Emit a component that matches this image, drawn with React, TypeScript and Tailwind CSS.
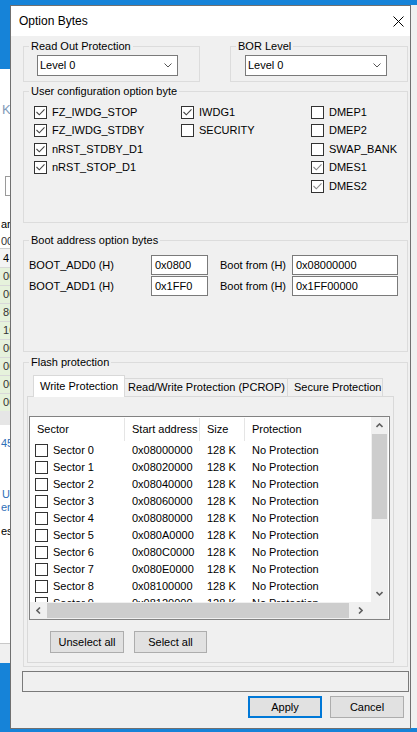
import React from 'react'

const sectors = [
  ['Sector 0', '0x08000000'],
  ['Sector 1', '0x08020000'],
  ['Sector 2', '0x08040000'],
  ['Sector 3', '0x08060000'],
  ['Sector 4', '0x08080000'],
  ['Sector 5', '0x080A0000'],
  ['Sector 6', '0x080C0000'],
  ['Sector 7', '0x080E0000'],
  ['Sector 8', '0x08100000'],
  ['Sector 9', '0x08120000'],
]

function Check({ on, dim }: { on?: boolean; dim?: boolean }) {
  return (
    <span className="flex h-[13px] w-[13px] shrink-0 items-center justify-center border border-[#333333] bg-white">
      {on && (
        <svg width="11" height="11" viewBox="0 0 11 11">
          <path
            d="M1.5 5 L4.3 7.8 L9.5 2.3"
            fill="none"
            strokeWidth="1.1"
            className={dim ? 'stroke-[#8a8a8a]' : 'stroke-[#444444]'}
          />
        </svg>
      )}
    </span>
  )
}

function CheckItem({ label, on, dim }: { label: string; on?: boolean; dim?: boolean }) {
  return (
    <div className="flex h-[18.5px] items-center">
      <Check on={on} dim={dim} />
      <span className="ml-[5px]">{label}</span>
    </div>
  )
}

function Combo({ w }: { w: string }) {
  return (
    <div className={`flex h-[21px] items-center justify-between border border-[#7a7a7a] bg-white pl-[2px] pr-[5px] ${w}`}>
      <span>Level 0</span>
      <svg width="8" height="5" viewBox="0 0 8 5">
        <path d="M0.5 0.5 L4 4 L7.5 0.5" fill="none" stroke="#555" strokeWidth="1" />
      </svg>
    </div>
  )
}

function Group({ title, className, children }: { title: string; className: string; children: React.ReactNode }) {
  return (
    <fieldset className={`border border-[#dcdcdc] ${className}`}>
      <legend className="ml-[5px] px-[2px] leading-[14px]">{title}</legend>
      {children}
    </fieldset>
  )
}

function Btn({ label, primary, w }: { label: string; primary?: boolean; w: string }) {
  return (
    <div
      className={`flex h-[22px] items-center justify-center bg-[#e1e1e1] ${w} ${
        primary ? 'border-2 border-[#0078d7]' : 'border border-[#adadad]'
      }`}
    >
      {label}
    </div>
  )
}

function Arrow({ dir }: { dir: 'up' | 'down' | 'left' | 'right' }) {
  const d = {
    up: 'M0.5 4 L3.5 1 L6.5 4',
    down: 'M0.5 1 L3.5 4 L6.5 1',
    left: 'M4 0.5 L1 3.5 L4 6.5',
    right: 'M1 0.5 L4 3.5 L1 6.5',
  }[dir]
  const vert = dir === 'up' || dir === 'down'
  return (
    <svg width={vert ? 7 : 5} height={vert ? 5 : 7} viewBox={vert ? '0 0 7 5' : '0 0 5 7'}>
      <path d={d} fill="none" stroke="#606060" strokeWidth="1.6" />
    </svg>
  )
}

function SectorList() {
  return (
    <div className="ml-[1px] mt-[19px] flex h-[204px] w-[361px] flex-col border border-[#828282] bg-white">
      <div className="flex h-[185px]">
        <div className="w-[341px] overflow-hidden">
          <div className="grid h-[25px] grid-cols-[95px_75px_45px_126px] items-center">
            <div className="flex h-[23px] items-center border-r border-[#e5e5e5] pl-[7px]">Sector</div>
            <div className="flex h-[23px] items-center border-r border-[#e5e5e5] pl-[7px]">Start address</div>
            <div className="flex h-[23px] items-center border-r border-[#e5e5e5] pl-[7px]">Size</div>
            <div className="flex h-[23px] items-center pl-[7px]">Protection</div>
          </div>
          {sectors.map(([name, addr]) => (
            <div key={name} className="grid h-[17px] grid-cols-[95px_75px_45px_126px] items-center">
              <div className="flex items-center pl-[5px]">
                <Check />
                <span className="ml-[5px]">{name}</span>
              </div>
              <div className="pl-[7px]">{addr}</div>
              <div className="pl-[7px]">128 K</div>
              <div className="pl-[7px]">No Protection</div>
            </div>
          ))}
        </div>
        <div className="flex w-[17px] flex-col bg-[#f0f0f0]">
          <div className="flex h-[17px] items-center justify-center">
            <Arrow dir="up" />
          </div>
          <div className="mx-[1px] h-[85px] bg-[#cdcdcd]" />
          <div className="flex-1" />
          <div className="flex h-[17px] items-center justify-center">
            <Arrow dir="down" />
          </div>
        </div>
      </div>
      <div className="flex h-[17px]">
        <div className="flex w-[341px] items-center bg-[#f0f0f0]">
          <div className="flex w-[17px] justify-center">
            <Arrow dir="left" />
          </div>
          <div className="my-[1px] h-[15px] w-[302px] bg-[#cdcdcd]" />
          <div className="flex flex-1 justify-center">
            <Arrow dir="right" />
          </div>
        </div>
        <div className="w-[17px] bg-[#f0f0f0]" />
      </div>
    </div>
  )
}

function LeftStrip() {
  return (
    <div className="flex h-full w-[10px] flex-col overflow-hidden whitespace-nowrap text-[11px]">
      <div className="h-[69px] bg-[#1683d8]" />
      <div className="flex h-[574px] flex-col bg-white">
        <div className="mt-[34px] pl-[2px] text-[13px] text-[#7f9ab8]">K</div>
        <div className="ml-[5px] mt-[60px] h-[20px] border border-r-0 border-[#9a9a9a]" />
        <div className="mt-[22px] pl-[1px]">ar</div>
        <div className="mt-[4px] pl-[1px] text-[#333]">002</div>
        <div className="border-t border-[#cfcfcf] bg-[#f4f4f4] pl-[3px] leading-[18px]">4</div>
        {['0', '0', '8', '1', '0', '0', '0', '0'].map((t, i) => (
          <div key={i} className="border-t border-[#d9d9d9] bg-[#e6f2dc] pl-[3px] leading-[17px] text-[#333]">
            {t}0
          </div>
        ))}
        <div className="h-[14px] bg-[#e6e6e6]" />
        <div className="mt-[12px] pl-[1px] text-[#2f6fb8]">45</div>
        <div className="mt-[38px] pl-[2px] text-[#2f6fb8]">U</div>
        <div className="pl-[1px] leading-[12px] text-[#2f6fb8]">ena</div>
        <div className="mt-[12px] pl-[1px]">es</div>
      </div>
      <div className="h-[20px] border-t border-[#c8c8c8] bg-[#f0f0f0]" />
      <div className="flex-1 bg-[#1683d8]" />
    </div>
  )
}

function RightStrip() {
  return (
    <div className="flex h-full w-[6px] flex-col overflow-hidden whitespace-nowrap text-[11px]">
      <div className="h-[5px] bg-[#1683d8]" />
      <div className="flex-1 bg-[#f0f0f0]" />
      <div className="h-[4px] bg-[#1683d8]" />
    </div>
  )
}

export default function App() {
  return (
    <div className="flex h-[732px] w-[417px] overflow-hidden bg-[#1683d8] font-[family-name:'Liberation_Sans',Arial,sans-serif] text-[11px] leading-[13px] text-black">
      <LeftStrip />
      <div className="flex w-[401px] flex-col">
        <div className="h-[5px] shrink-0 bg-[#1683d8]" />
        <div className="flex h-[724px] shrink-0 flex-col border border-[#707070] bg-[#f0f0f0]">
          <div className="flex h-[30px] shrink-0 items-center justify-between bg-white pl-[8px] pr-[6px]">
            <span className="text-[12px]">Option Bytes</span>
            <svg width="11" height="11" viewBox="0 0 11 11">
              <path d="M0.5 0.5 L10.5 10.5 M10.5 0.5 L0.5 10.5" stroke="#000" strokeWidth="1" />
            </svg>
          </div>

          <div className="flex flex-col pl-[12px]">
            <div className="mt-[3px] flex">
              <Group title="Read Out Protection" className="h-[43px] w-[177px]">
                <div className="pl-[13px] pt-[2px]">
                  <Combo w="w-[141px]" />
                </div>
              </Group>
              <Group title="BOR Level" className="ml-[30px] h-[43px] w-[178px]">
                <div className="pl-[14px] pt-[2px]">
                  <Combo w="w-[142px]" />
                </div>
              </Group>
            </div>

            <Group title="User configuration option byte" className="mt-[2px] h-[139px] w-[385px]">
              <div className="grid grid-cols-[147px_130px_1fr] pl-[10px] pt-[5px]">
                <div>
                  <CheckItem label="FZ_IWDG_STOP" on />
                  <CheckItem label="FZ_IWDG_STDBY" on />
                  <CheckItem label="nRST_STDBY_D1" on />
                  <CheckItem label="nRST_STOP_D1" on />
                </div>
                <div>
                  <CheckItem label="IWDG1" on />
                  <CheckItem label="SECURITY" />
                </div>
                <div>
                  <CheckItem label="DMEP1" />
                  <CheckItem label="DMEP2" />
                  <CheckItem label="SWAP_BANK" />
                  <CheckItem label="DMES1" on dim />
                  <CheckItem label="DMES2" on dim />
                </div>
              </div>
            </Group>

            <Group title="Boot address option bytes" className="mt-[10px] h-[119px] w-[385px]">
              <div className="flex flex-col gap-[1px] pt-[8px]">
                {[
                  ['BOOT_ADD0 (H)', '0x0800', '0x08000000'],
                  ['BOOT_ADD1 (H)', '0x1FF0', '0x1FF00000'],
                ].map(([label, a, b]) => (
                  <div key={label} className="flex h-[20px] items-center">
                    <span className="w-[127px] pl-[5px]">{label}</span>
                    <div className="flex h-full w-[57px] items-center border border-[#7a7a7a] bg-white pl-[3px]">{a}</div>
                    <span className="ml-[12px] w-[72px]">Boot from (H)</span>
                    <div className="flex h-full w-[106px] items-center border border-[#7a7a7a] bg-white pl-[3px]">{b}</div>
                  </div>
                ))}
              </div>
            </Group>

            <Group title="Flash protection" className="mt-[3px] h-[312px] w-[385px]">
              <div className="pl-[3px] pt-[6px]">
                <div className="flex items-end pl-[6px]">
                  <div className="relative z-10 -mb-px flex h-[22px] w-[92px] items-center border border-b-0 border-[#d9d9d9] bg-white pl-[6px]">
                    Write Protection
                  </div>
                  <div className="flex h-[18px] w-[163px] items-center border-r border-t border-[#d9d9d9] pl-[3px]">
                    Read/Write Protection (PCROP)
                  </div>
                  <div className="flex h-[18px] w-[95px] items-center border-r border-t border-[#d9d9d9] pl-[6px]">
                    Secure Protection
                  </div>
                </div>
                <div className="flex h-[267px] w-[367px] flex-col border border-[#d9d9d9]">
                  <SectorList />
                  <div className="ml-[22px] mt-[11px] flex gap-[10px]">
                    <Btn label="Unselect all" w="w-[74px]" />
                    <Btn label="Select all" w="w-[73px]" />
                  </div>
                </div>
              </div>
            </Group>
          </div>

          <div className="ml-[11px] mt-[4px] h-[21px] w-[387px] border border-[#7a7a7a]" />

          <div className="ml-[237px] mt-[4px] flex gap-[8px]">
            <Btn label="Apply" primary w="w-[74px]" />
            <Btn label="Cancel" w="w-[74px]" />
          </div>
        </div>
        <div className="flex-1 bg-[#1683d8]" />
      </div>
      <RightStrip />
    </div>
  )
}
